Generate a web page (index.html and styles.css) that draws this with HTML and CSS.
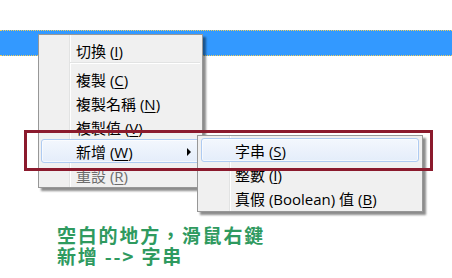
FILE: index.html
```html
<!DOCTYPE html>
<html lang="zh-Hant">
<head>
    <meta charset="UTF-8">
    <title>新增字串</title>
    <link rel="stylesheet" href="styles.css">
</head>
<body>
    <div class="bar"></div>

    <div class="note">
        <p>空白的地方，滑鼠右鍵</p>
        <p>新增 --&gt; 字串</p>
    </div>

    <!-- context menu -->
    <div class="menu main-menu">
        <div class="item">切換 (<u>I</u>)</div>
        <div class="sep"></div>
        <div class="item">複製 (<u>C</u>)</div>
        <div class="item">複製名稱 (<u>N</u>)</div>
        <div class="item">複製值 (<u>V</u>)</div>
        <div class="item active has-sub">新增 (<u>W</u>)<span class="arrow"></span></div>
        <div class="item disabled">重設 (<u>R</u>)</div>
    </div>

    <div class="menu sub-menu">
        <div class="item active">字串 (<u>S</u>)</div>
        <div class="item">整數 (<u>I</u>)</div>
        <div class="item">真假 (Boolean) 值 (<u>B</u>)</div>
    </div>

    <div class="mark"></div>
</body>
</html>
```

FILE: styles.css
```css
* {
    margin: 0;
    padding: 0;
    box-sizing: border-box;
}

body {
    background: #fff;
    font-family: "Open Sans", "Noto Sans CJK TC", sans-serif;
}

.bar {
    margin-top: 30px;
    height: 26px;
    background: #3399ff;
    border-top: 1px dotted #f2cf5c;
    border-bottom: 1px dotted #f2cf5c;
}

.note {
    margin-top: 168px;
    padding-left: 57px;
    color: #2f9a5f;
    font-family: "Noto Sans CJK TC", sans-serif;
    font-weight: bold;
    font-size: 19px;
    line-height: 21px;
    letter-spacing: 1.8px;
}

/* popup menus */
.menu {
    position: absolute;
    border: 1px solid #979797;
    box-shadow: 3px 3px 2px rgba(0, 0, 0, 0.45);
    font-size: 15px;
    color: #000;
}

.main-menu {
    left: 38px;
    top: 34px;
    width: 165px;
    padding: 3px 2px 0 2px;
    background: linear-gradient(to right, #f0f0f0 30px, #e2e3e3 30px, #e2e3e3 31px, #fff 31px, #fff 32px, #f0f0f0 32px);
}

.sub-menu {
    left: 197px;
    top: 135px;
    width: 226px;
    padding: 2px 3px 1px 3px;
    background: linear-gradient(to right, #f0f0f0 31px, #e2e3e3 31px, #e2e3e3 32px, #fff 32px, #fff 33px, #f0f0f0 33px);
}

.item {
    display: flex;
    align-items: center;
    height: 24px;
    padding: 2px 0 0 34px;
    line-height: 20px;
    border: 1px solid transparent;
    border-radius: 3px;
    white-space: nowrap;
}

.sub-menu .item {
    padding-left: 33px;
}

.item u {
    text-decoration: underline;
    text-underline-offset: 2px;
}

.item.active {
    background: linear-gradient(#f3f7fd, #e4edfa);
    border-color: #aecbf2;
    box-shadow: inset 0 0 0 1px rgba(255, 255, 255, 0.6);
}

.item.disabled {
    color: #6d6d6d;
}

.arrow {
    margin-left: auto;
    margin-right: 8px;
    width: 0;
    height: 0;
    border-left: 4px solid #000;
    border-top: 4px solid transparent;
    border-bottom: 4px solid transparent;
}

.sep {
    height: 5px;
    margin-left: 29px;
    border-top: 1px solid #e2e3e3;
    box-shadow: inset 0 1px 0 #fff;
}

/* red highlight frame drawn over the menus */
.mark {
    position: absolute;
    left: 24px;
    top: 130px;
    width: 409px;
    height: 41px;
    border: 3px solid #8b1a2d;
}
```
